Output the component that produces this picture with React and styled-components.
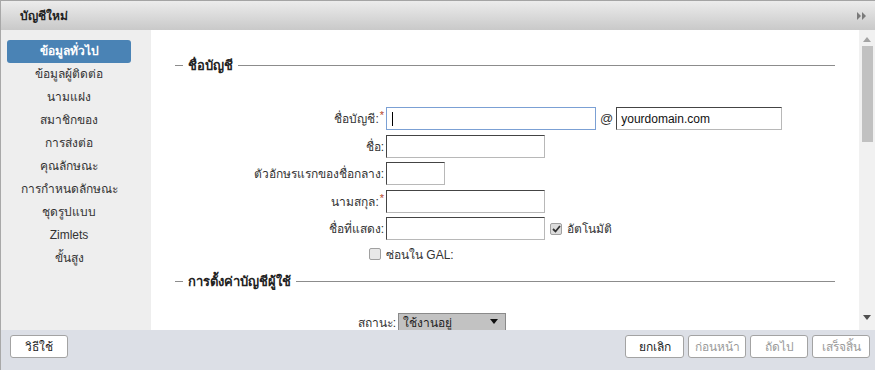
import React from "react";
import styled, { createGlobalStyle } from "styled-components";

const GlobalStyle = createGlobalStyle`
  html, body {
    margin: 0;
    padding: 0;
    background: #ffffff;
  }
  body {
    font-family: "Liberation Sans", Arial, "Noto Sans", sans-serif;
    font-size: 12px;
    color: #333;
  }
`;

const Window = styled.div`
  width: 875px;
  height: 370px;
  display: flex;
  flex-direction: column;
  border-left: 1px solid #a8a8a8;
  box-sizing: border-box;
  overflow: hidden;
`;

const TitleBar = styled.div`
  height: 30px;
  flex: none;
  display: flex;
  align-items: center;
  justify-content: space-between;
  padding: 0 8px 0 19px;
  box-sizing: border-box;
  border-top: 1px solid #a4a4a4;
  background: linear-gradient(#ececec, #c9c9c9);
`;

const Title = styled.div`
  font-weight: bold;
  font-size: 12px;
  color: #222;
`;

const Body = styled.div`
  flex: 1;
  display: flex;
  min-height: 0;
`;

const Sidebar = styled.ul`
  width: 150px;
  flex: none;
  margin: 0;
  padding: 10px 20px 0 6px;
  box-sizing: border-box;
  list-style: none;
  background: #eeeeee;
`;

const NavItem = styled.li`
  height: 23px;
  line-height: 23px;
  text-align: center;
  border-radius: 3px;
  font-size: 12px;
  color: ${(p) => (p.$active ? "#ffffff" : "#333")};
  font-weight: ${(p) => (p.$active ? "bold" : "normal")};
  background: ${(p) => (p.$active ? "#4a83b5" : "transparent")};
`;

const Content = styled.div`
  flex: 1;
  background: #fff;
  padding: 0 24px;
  overflow: hidden;
`;

const Legend = styled.div`
  display: flex;
  align-items: center;
  height: 20px;
  margin-top: ${(p) => p.$top}px;
  font-weight: bold;
  font-size: 13px;
  color: #222;
  &::before {
    content: "";
    width: 8px;
    height: 1px;
    background: #8c8c8c;
    margin-right: 5px;
  }
  &::after {
    content: "";
    flex: 1;
    height: 1px;
    background: #8c8c8c;
    margin-left: 5px;
  }
`;

const Form = styled.div`
  display: grid;
  grid-template-columns: ${(p) => p.$label}px auto;
  column-gap: 2px;
  row-gap: 4.5px;
  margin-top: ${(p) => p.$top}px;
  margin-left: -24px;
  align-items: center;
`;

const Label = styled.div`
  text-align: right;
  font-size: 12px;
  color: #333;
  display: flex;
  justify-content: flex-end;
  align-items: center;
`;

const Req = styled.span`
  color: #b5472a;
  margin-left: 1px;
  font-size: 11px;
  align-self: flex-start;
`;

const Cell = styled.div`
  display: flex;
  align-items: center;
  gap: ${(p) => p.$gap || 0}px;
`;

const TextBox = styled.div`
  width: ${(p) => p.$w}px;
  height: 23px;
  box-sizing: border-box;
  border: 1px solid;
  border-color: ${(p) =>
    p.$focused ? "#7ba0d4" : "#444 #b8b8b8 #b8b8b8 #444"};
  background: #fff;
  display: flex;
  align-items: center;
  padding-left: 4px;
  font-size: 12px;
  color: #111;
`;

const Caret = styled.span`
  width: 1px;
  height: 14px;
  background: #000;
  margin-left: 1px;
`;

const At = styled.span`
  font-size: 13px;
  color: #333;
  margin: 0 3px 0 4px;
`;

const Check = styled.span`
  width: 12px;
  height: 12px;
  box-sizing: border-box;
  border: 1px solid #a0a0a0;
  border-radius: 2px;
  background: ${(p) => (p.$checked ? "#dcdcdc" : "#e8e8e8")};
  display: inline-flex;
  align-items: center;
  justify-content: center;
  margin-right: ${(p) => p.$mr || 0}px;
`;

const Select = styled.div`
  width: 108px;
  height: 18px;
  box-sizing: border-box;
  border: 1px solid #8a8a8a;
  background: #c2c2c2;
  display: flex;
  align-items: center;
  justify-content: space-between;
  padding: 0 6px 0 4px;
  color: #222;
`;

const Scrollbar = styled.div`
  width: 16px;
  flex: none;
  background: #f1f1f1;
  display: flex;
  flex-direction: column;
  align-items: center;
  padding-top: 6px;
  box-sizing: border-box;
`;

const Thumb = styled.div`
  width: 11px;
  height: 96px;
  background: #c1c1c1;
  margin-top: 4px;
`;

const Footer = styled.div`
  height: 40px;
  flex: none;
  background: #dcdfe6;
  display: flex;
  justify-content: space-between;
  padding: 5px 5px 0 9px;
  box-sizing: border-box;
`;

const ButtonGroup = styled.div`
  display: flex;
  gap: 4px;
`;

const Button = styled.button`
  width: ${(p) => p.$w || 58}px;
  height: 23px;
  padding: 0;
  border: 1px solid #a3a3a3;
  border-radius: 3px;
  background: #fff;
  font-family: inherit;
  font-size: 12px;
  color: ${(p) => (p.disabled ? "#9a9a9a" : "#222")};
`;

const Triangle = ({ dir, color }) => (
  <svg width="10" height="6" viewBox="0 0 10 6" style={{ flex: "none" }}>
    {dir === "up" ? (
      <path d="M1 6 L5 1 L9 6 Z" fill={color} />
    ) : (
      <path d="M1 0 L5 5 L9 0 Z" fill={color} />
    )}
  </svg>
);

const navItems = [
  "ข้อมูลทั่วไป",
  "ข้อมูลผู้ติดต่อ",
  "นามแฝง",
  "สมาชิกของ",
  "การส่งต่อ",
  "คุณลักษณะ",
  "การกำหนดลักษณะ",
  "ชุดรูปแบบ",
  "Zimlets",
  "ขั้นสูง",
];

export default function App() {
  return (
    <>
      <GlobalStyle />
      <Window>
        <TitleBar>
          <Title>บัญชีใหม่</Title>
          <svg width="10" height="8" viewBox="0 0 10 8">
            <path d="M0 0 L4 4 L0 8 Z M5 0 L9 4 L5 8 Z" fill="#7a7a7a" />
          </svg>
        </TitleBar>
        <Body>
          <Sidebar>
            {navItems.map((n, i) => (
              <NavItem key={n} $active={i === 0}>
                {n}
              </NavItem>
            ))}
          </Sidebar>
          <Content>
            <Legend $top={25}>ชื่อบัญชี</Legend>
            <Form $label={233} $top={32}>
              <Label>
                ชื่อบัญชี:<Req>*</Req>
              </Label>
              <Cell>
                <TextBox $w={210} $focused>
                  <Caret />
                </TextBox>
                <At>@</At>
                <TextBox $w={166}>yourdomain.com</TextBox>
              </Cell>
              <Label>ชื่อ:</Label>
              <Cell>
                <TextBox $w={159} />
              </Cell>
              <Label>ตัวอักษรแรกของชื่อกลาง:</Label>
              <Cell>
                <TextBox $w={59} />
              </Cell>
              <Label>
                นามสกุล:<Req>*</Req>
              </Label>
              <Cell>
                <TextBox $w={159} />
              </Cell>
              <Label>ชื่อที่แสดง:</Label>
              <Cell $gap={5}>
                <TextBox $w={159} />
                <Check $checked>
                  <svg width="9" height="8" viewBox="0 0 9 8">
                    <path
                      d="M1 4 L3.5 6.5 L8 1"
                      stroke="#333"
                      strokeWidth="1.8"
                      fill="none"
                    />
                  </svg>
                </Check>
                <span>อัตโนมัติ</span>
              </Cell>
              <Label>
                <Check $mr={3} />
              </Label>
              <Cell>ซ่อนใน GAL:</Cell>
            </Form>
            <Legend $top={8}>การตั้งค่าบัญชีผู้ใช้</Legend>
            <Form $label={245} $top={21}>
              <Label>สถานะ:</Label>
              <Cell>
                <Select>
                  <span>ใช้งานอยู่</span>
                  <Triangle dir="down" color="#111" />
                </Select>
              </Cell>
            </Form>
          </Content>
          <Scrollbar>
            <Triangle dir="up" color="#a3a3a3" />
            <Thumb />
            <div style={{ flex: 1 }} />
            <div style={{ marginBottom: 6 }}>
              <Triangle dir="down" color="#505050" />
            </div>
          </Scrollbar>
        </Body>
        <Footer>
          <Button>วิธีใช้</Button>
          <ButtonGroup>
            <Button $w={59}>ยกเลิก</Button>
            <Button disabled>ก่อนหน้า</Button>
            <Button disabled>ถัดไป</Button>
            <Button disabled>เสร็จสิ้น</Button>
          </ButtonGroup>
        </Footer>
      </Window>
    </>
  );
}
